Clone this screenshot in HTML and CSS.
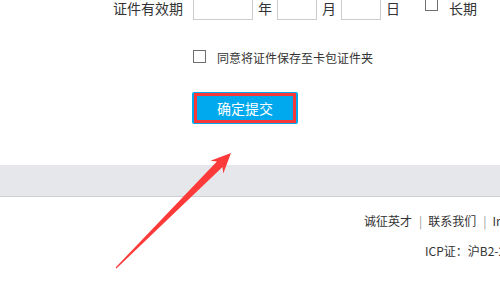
FILE: index.html
```html
<!DOCTYPE html>
<html lang="zh-CN">
<head>
<meta charset="utf-8">
<title>证件</title>
<link rel="stylesheet" href="styles.css">
</head>
<body>
<div class="page">
  <div class="row-validity">
    <span class="label">证件有效期</span>
    <span class="box box-year"></span>
    <span class="unit">年</span>
    <span class="box box-small"></span>
    <span class="unit">月</span>
    <span class="box box-small"></span>
    <span class="unit">日</span>
    <span class="check check-long"></span>
    <span class="unit-long">长期</span>
  </div>
  <div class="row-agree">
    <span class="check"></span>
    <span class="agree-text">同意将证件保存至卡包证件夹</span>
  </div>
  <div class="row-submit">
    <button class="submit">确定提交</button>
  </div>
  <div class="band"></div>
  <div class="footer-links">
    <span>诚征英才</span><span class="sep">|</span><span>联系我们</span><span class="sep">|</span><span>Investor Relations</span>
  </div>
  <div class="footer-icp">ICP证：沪B2-20050118</div>

  <div class="mark-box"></div>
  <svg class="mark-arrow" width="500" height="296" viewBox="0 0 500 296">
    <polygon fill="#fd3a3a" points="231,153 210.5,160.7 216.9,161.5 115.6,267.6 116.4,268.4 222.5,167.1 223.3,173.5"/>
  </svg>
</div>
</body>
</html>
```

FILE: styles.css
```css
html, body {
  margin: 0;
  padding: 0;
  background: #fff;
}
body {
  width: 500px;
  height: 296px;
  overflow: hidden;
  font-family: "Noto Sans CJK SC", "Noto Sans", sans-serif;
  color: #333;
}
.page {
  position: relative;
  width: 500px;
  height: 296px;
  display: flex;
  flex-direction: column;
}
.row-validity {
  display: flex;
  align-items: center;
  height: 28px;
  margin-top: -8px;
  padding-left: 113px;
  font-size: 14px;
  line-height: 12px;
  white-space: nowrap;
}
.label {
  margin-right: 10px;
  padding-top: 3px;
}
.box {
  box-sizing: border-box;
  height: 28px;
  border: 1px solid #ccc;
  background: #fff;
}
.box-year { width: 60px; }
.box-small { width: 40px; }
.unit {
  width: 14px;
  margin: 0 5px;
  padding-top: 3px;
}
.check {
  box-sizing: border-box;
  display: inline-block;
  width: 13px;
  height: 13px;
  border: 1px solid #6f6f6f;
  background: #fff;
  flex: none;
}
.check-long {
  margin-left: 20px;
  margin-top: -4px;
}
.unit-long {
  margin-left: 11px;
  padding-top: 3px;
}
.row-agree {
  display: flex;
  align-items: center;
  height: 20px;
  margin-top: 26px;
  padding-left: 193px;
  font-size: 12px;
}
.agree-text {
  margin-left: 11px;
  padding-top: 2px;
}
.row-submit {
  margin-top: 26px;
  padding-left: 192px;
  height: 32px;
}
.submit {
  width: 106px;
  height: 32px;
  border: none;
  border-radius: 2px;
  background: #00a9ee;
  color: #fff;
  font-family: "Noto Sans CJK SC", sans-serif;
  font-size: 14px;
  padding: 0;
  line-height: 32px;
}
.band {
  margin-top: 41px;
  height: 31px;
  background: #e6e7eb;
  border-bottom: 1px solid #cfcfd1;
  flex: none;
}
.footer-links {
  margin-top: 14px;
  height: 20px;
  line-height: 20px;
  padding-left: 364px;
  font-size: 12px;
  white-space: nowrap;
}
.sep {
  color: #999;
  margin: 0 6px 0 7px;
}
.footer-icp {
  margin-top: 10px;
  height: 20px;
  line-height: 20px;
  padding-left: 425px;
  font-size: 12px;
  white-space: nowrap;
}
.mark-box {
  position: absolute;
  left: 194px;
  top: 93px;
  width: 102px;
  height: 30px;
  box-sizing: border-box;
  border: 3px solid #f83838;
}
.mark-arrow {
  position: absolute;
  left: 0;
  top: 0;
}
```
